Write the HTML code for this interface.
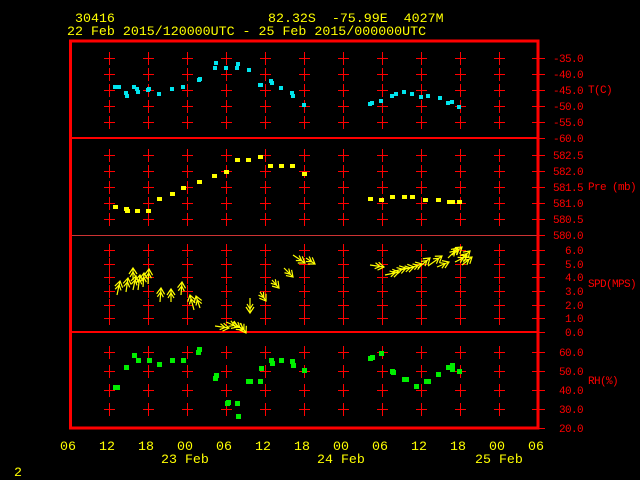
<!DOCTYPE html>
<html><head><meta charset="utf-8"><style>
html,body{margin:0;padding:0;background:#000;width:640px;height:480px;overflow:hidden}
svg{display:block}
.y{fill:#ffff00;font-family:"Liberation Mono",monospace;font-size:13.3px}
.r{fill:#ff0000;font-family:"Liberation Mono",monospace;font-size:11px;letter-spacing:-0.6px}
</style></head><body>
<svg id="s" width="640" height="480" xmlns="http://www.w3.org/2000/svg">
<rect width="640" height="480" fill="#000"/>
<g id="grid" fill="#ff0000"></g>
<rect x="70" y="137" width="468" height="2" fill="#f00"/>
<rect x="70" y="235" width="468" height="1" fill="#c33"/>
<rect x="70" y="331" width="468" height="2" fill="#f00"/>
<rect x="70.5" y="41" width="467.5" height="387" fill="none" stroke="#f00" stroke-width="3"/>
<g id="pts"></g>
<g id="wind" stroke="#ffff00" stroke-width="1.2" fill="none"></g>
<text class="y" x="75" y="22">30416</text>
<text class="y" x="268" y="22" xml:space="preserve">82.32S  -75.99E  4027M</text>
<text class="y" x="67" y="35">22 Feb 2015/120000UTC - 25 Feb 2015/000000UTC</text>
<g class="r">
<text x="553" y="62">-35.0</text><text x="553" y="78">-40.0</text><text x="553" y="94">-45.0</text>
<text x="553" y="110">-50.0</text><text x="553" y="126">-55.0</text><text x="553" y="142">-60.0</text>
<text x="588" y="93">T(C)</text>
<text x="553" y="159">582.5</text><text x="553" y="175">582.0</text><text x="553" y="191">581.5</text>
<text x="553" y="207">581.0</text><text x="553" y="223">580.5</text><text x="553" y="239">580.0</text>
<text x="588" y="190" xml:space="preserve">Pre (mb)</text>
<text x="565" y="254">6.0</text><text x="565" y="268">5.0</text><text x="565" y="281">4.0</text>
<text x="565" y="295">3.0</text><text x="565" y="309">2.0</text><text x="565" y="322">1.0</text><text x="565" y="336">0.0</text>
<text x="588" y="287">SPD(MPS)</text>
<text x="559" y="356">60.0</text><text x="559" y="375">50.0</text><text x="559" y="394">40.0</text>
<text x="559" y="413">30.0</text><text x="559" y="432">20.0</text>
<text x="588" y="384">RH(%)</text>
</g>
<g class="y">
<text x="60" y="450">06</text><text x="99" y="450">12</text><text x="138" y="450">18</text>
<text x="177" y="450">00</text><text x="216" y="450">06</text><text x="255" y="450">12</text>
<text x="294" y="450">18</text><text x="333" y="450">00</text><text x="372" y="450">06</text>
<text x="411" y="450">12</text><text x="450" y="450">18</text><text x="489" y="450">00</text>
<text x="528" y="450">06</text>
<text x="161" y="463">23 Feb</text><text x="317" y="463">24 Feb</text><text x="475" y="463">25 Feb</text>
<text x="14" y="476">2</text>
</g>
</svg>
<script>
var NS="http://www.w3.org/2000/svg";
function el(p,t,a){var e=document.createElementNS(NS,t);for(var k in a)e.setAttribute(k,a[k]);p.appendChild(e);return e;}
var g=document.getElementById('grid');
var lv=[58,74,90,106,122,155,171,187,203,219,250,264,277,291,305,318,352,371,390,409];
for(var k=1;k<=11;k++){var x=70+39*k;
 lv.forEach(function(y){el(g,'rect',{x:x-5,y:y,width:11,height:1});el(g,'rect',{x:x,y:y-6,width:1,height:13});});}
[58,74,90,106,122,138,155,171,187,203,219,235,250,264,277,291,305,318,332,352,371,390,409,428].forEach(function(y){el(g,'rect',{x:532,y:y,width:13,height:1});});
var P=document.getElementById('pts');
function pts(arr,c,w,h){arr.forEach(function(p){el(P,'rect',{x:p[0]-2,y:p[1]-2,width:w,height:h,fill:c});});}
pts([[115,87],[119,87],[126,93],[127,96],[134,87],[137,89],[138,92],[148,90],[149,89],[159,94],[172,89],[183,87],[199,80],[200,79],[215,68],[216,63],[226,68],[237,68],[238,64],[249,70],[260,85],[261,85],[271,81],[272,83],[281,88],[292,93],[293,96],[304,105],[370,104],[372,103],[381,101],[392,96],[396,94],[404,92],[412,94],[421,97],[428,96],[440,98],[448,103],[452,102],[459,107]],'#00e5ee',4,4);
pts([[115,207],[126,209],[127,211],[137,211],[148,211],[159,199],[172,194],[183,188],[199,182],[214,176],[226,172],[237,160],[248,160],[260,157],[270,166],[281,166],[292,166],[304,174],[370,199],[381,200],[392,197],[404,197],[412,197],[425,200],[438,200],[449,202],[452,202],[459,202]],'#ffff00',5,4);
pts([[115,387],[117,387],[126,367],[134,355],[138,360],[149,360],[159,364],[172,360],[183,360],[198,352],[199,349],[215,378],[216,375],[227,403],[228,402],[237,403],[238,416],[248,381],[250,381],[260,381],[261,368],[271,360],[272,363],[281,360],[292,361],[293,365],[304,370],[370,358],[372,357],[381,353],[392,371],[393,372],[404,379],[406,379],[416,386],[426,381],[428,381],[438,374],[448,367],[452,365],[452,369],[459,371]],'#00ee00',5,5);
var W=document.getElementById('wind');
function arr(x,y,dx,dy){var x2=x+dx,y2=y+dy,L=Math.hypot(dx,dy),ux=dx/L,uy=dy/L;
 el(W,'line',{x1:x,y1:y,x2:x2,y2:y2});
 el(W,'polyline',{points:(x2-6*ux+4*uy)+','+(y2-6*uy-4*ux)+' '+x2+','+y2+' '+(x2-6*ux-4*uy)+','+(y2-6*uy+4*ux)});
 var mx=x2-4*ux,my=y2-4*uy;
 el(W,'polyline',{points:(mx-5*ux+3*uy)+','+(my-5*uy-3*ux)+' '+mx+','+my+' '+(mx-5*ux-3*uy)+','+(my-5*uy+3*ux)});}
[[117,295,3,-14],[126,292,2,-14],[133,290,3,-14],[138,290,2,-15],[143,287,1,-14],[148,284,1,-15],[133,280,0,-12],[160,302,1,-14],[171,302,0,-13],[181,295,1,-13],[194,310,-4,-15],[200,308,-4,-12],
[215,326,14,2],[226,322,12,5],[233,322,10,8],[240,323,6,10],[250,298,0,15],[260,292,6,9],[272,280,7,8],[284,268,9,9],[293,255,12,8],[306,258,9,6],
[370,265,14,2],[385,275,14,-3],[392,272,14,-4],[400,270,14,-3],[410,268,12,-4],[418,268,12,-10],[428,266,14,-10],[437,267,12,-5],[448,258,10,-10],[452,255,10,-8],[455,262,12,-6],[460,260,10,-9],[462,265,10,-8]].forEach(function(a){arr.apply(null,a);});
</script>
</body></html>
